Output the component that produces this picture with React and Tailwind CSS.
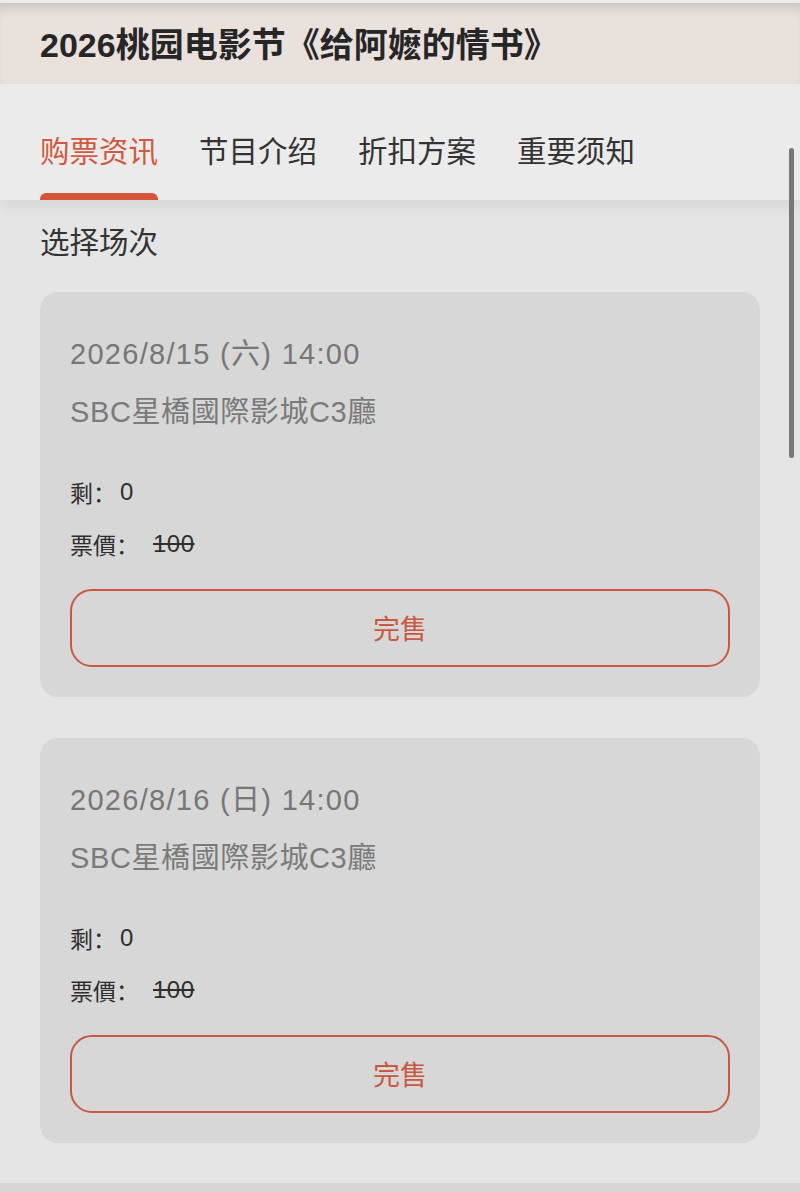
const sessions = [
    { id: 1, date: '2026/8/15 (六) 14:00', venue: 'SBC星橋國際影城C3廳', left: 0, price: 100 },
    { id: 2, date: '2026/8/16 (日) 14:00', venue: 'SBC星橋國際影城C3廳', left: 0, price: 100 },
];

const tabs = ['购票资讯', '节目介绍', '折扣方案', '重要须知'];

function SessionCard({ s }) {
    return (
        <div className="rounded-[18px] bg-[#d7d7d7] px-[30px] pt-[43px] pb-[30px]">
            <div className="h-10 flex items-center text-[29px] tracking-[1.3px] text-[#767676] font-['Liberation_Sans','Noto_Sans_CJK_TC',sans-serif]">
                {s.date}
            </div>
            <div className="mt-[18px] h-10 flex items-center text-[29px] tracking-[0.6px] text-[#7a7a7a] font-['Liberation_Sans','Noto_Sans_CJK_TC',sans-serif]">
                {s.venue}
            </div>
            <div className="mt-[43px] h-8 flex items-center text-[23px] text-[#2e2e2e]">
                <span>剩：</span>
                <span className="ml-[4px] text-[24px] font-['Liberation_Sans',sans-serif]">{s.left}</span>
            </div>
            <div className="mt-5 h-8 flex items-center text-[23px] text-[#2e2e2e]">
                <span>票價：</span>
                <span className="ml-[14px] text-[24px] tracking-[0.5px] line-through font-['Liberation_Sans',sans-serif]">{s.price}</span>
            </div>
            <button className="mt-[29px] w-full h-[78px] rounded-[22px] border-2 border-[#c9583f] text-[27px] text-[#c9583f] flex items-center justify-center">
                完售
            </button>
        </div>
    );
}

export default function App() {
    return (
        <div className="relative min-h-screen h-[1192px] bg-[#e5e5e5] flex flex-col font-['Noto_Sans_CJK_SC',sans-serif] overflow-hidden">
            <header className="h-[84px] shrink-0 bg-[#e8e1dc] px-10 flex items-center border-t-[3px] border-[#eeecea] shadow-[inset_0_10px_12px_-6px_rgba(0,0,0,0.15)]">
                <h1 className="pt-1 text-[34px] font-bold text-[#262626] font-['Liberation_Sans','Noto_Sans_CJK_SC',sans-serif]">
                    2026桃园电影节《给阿嬷的情书》
                </h1>
            </header>

            <nav className="relative z-10 h-[116px] shrink-0 bg-[#ebebeb] px-10 pt-[14px] flex gap-[41px] shadow-[0_6px_14px_rgba(0,0,0,0.07)]">
                {tabs.map((t, i) => (
                    <div key={t} className="relative flex items-center">
                        <span className={`text-[29.5px] ${i === 0 ? 'text-[#cf5a3f]' : 'text-[#333333]'}`}>{t}</span>
                        {i === 0 && (
                            <span className="absolute left-0 right-0 bottom-0 h-[7px] rounded-t-[6px] bg-[#d4553a]" />
                        )}
                    </div>
                ))}
            </nav>

            <main className="flex-1 px-10 pt-5">
                <h2 className="h-10 flex items-center text-[29.5px] text-[#333333]">选择场次</h2>
                <div className="mt-8 flex flex-col gap-[41px]">
                    {sessions.map((s) => (
                        <SessionCard key={s.id} s={s} />
                    ))}
                </div>
            </main>

            <div className="h-[9px] shrink-0 bg-[#d5d5d5]" />

            <div className="absolute z-20 left-[789px] top-[148px] w-[5px] h-[310px] rounded-full bg-[#777777]" />
        </div>
    );
}
